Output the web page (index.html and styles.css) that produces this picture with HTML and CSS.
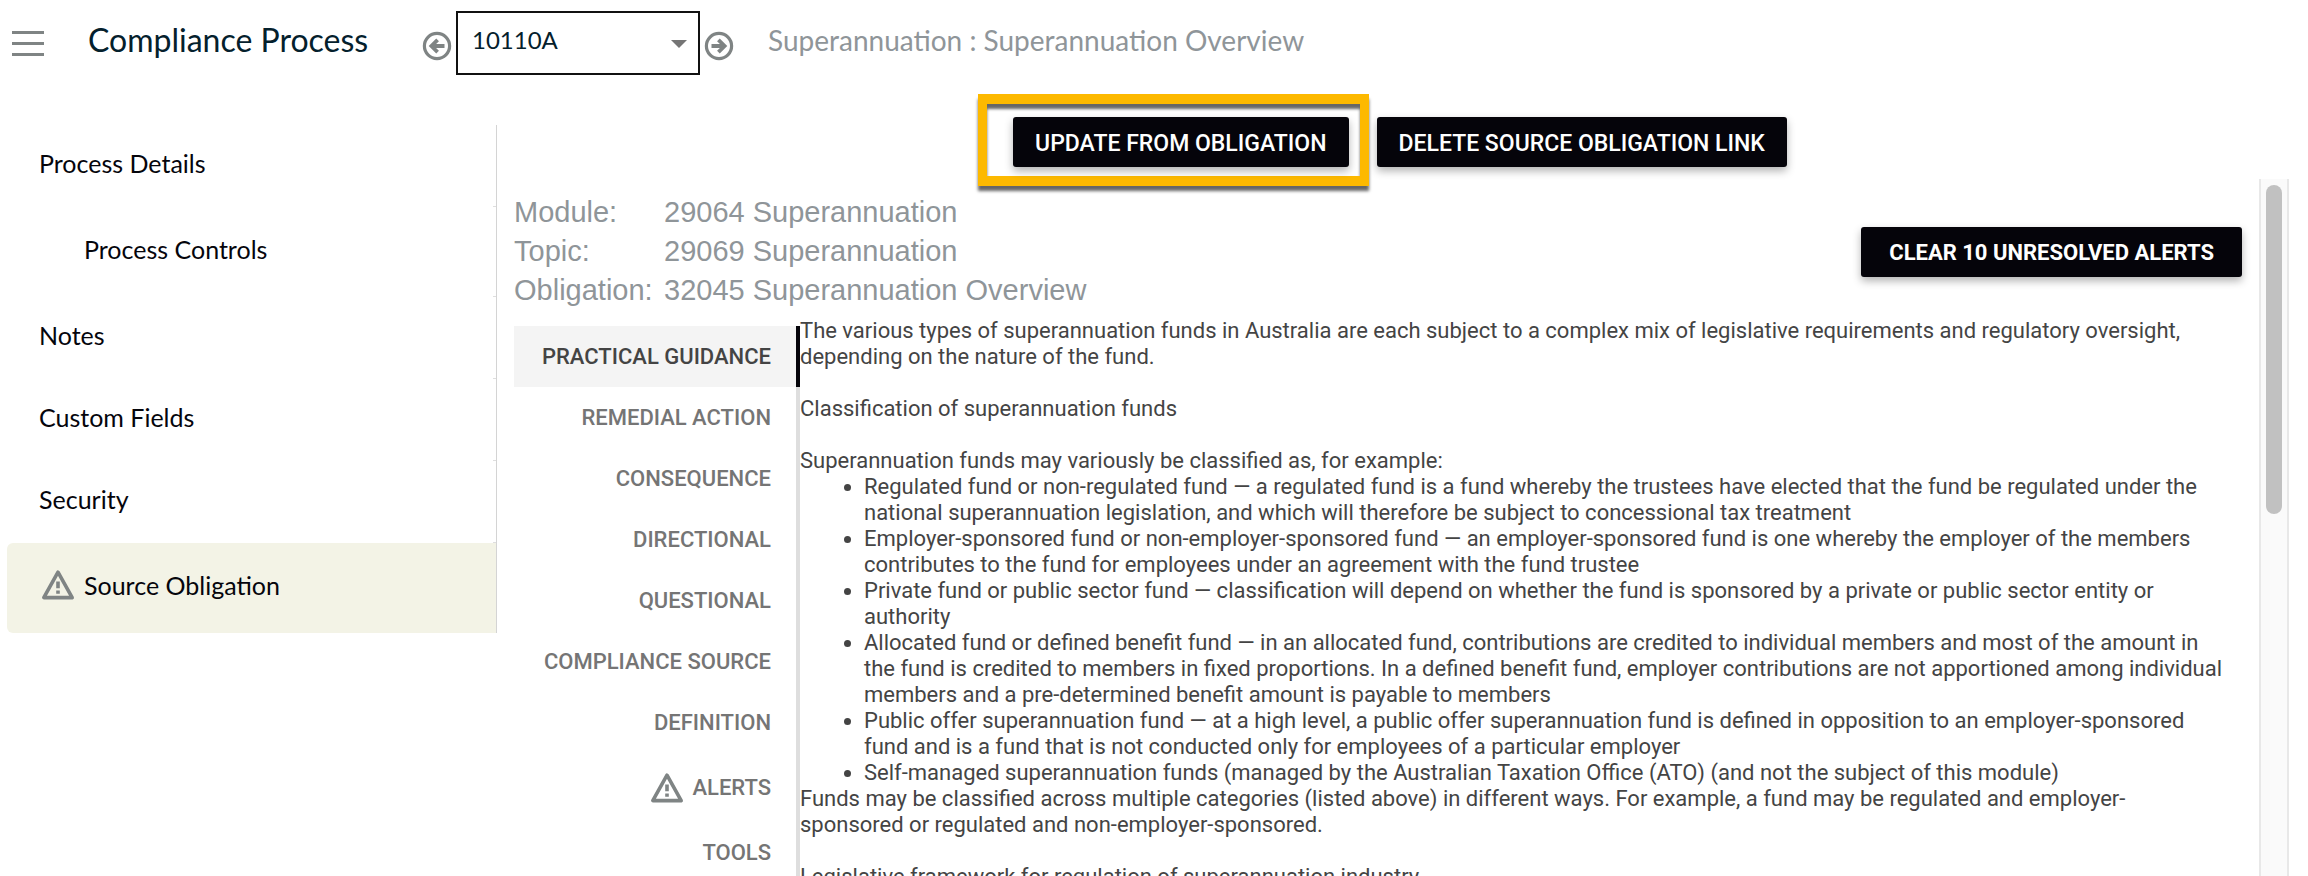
FILE: index.html
```html
<!DOCTYPE html>
<html lang="en">
<head>
<meta charset="utf-8">
<title>Compliance Process</title>
<link rel="stylesheet" href="styles.css">
</head>
<body>
<svg class="defs" aria-hidden="true">
  <symbol id="warning" viewBox="0 0 34 32">
    <path d="M17 3.2 31.2 28.6H2.8z" fill="none" stroke="#7f8484" stroke-width="3.6" stroke-linejoin="round"/>
    <path d="M17 12.6v6.6M17 21.4v3.4" fill="none" stroke="#7f8484" stroke-width="3.6"/>
  </symbol>
  <symbol id="arrow" viewBox="0 0 30 30">
    <circle cx="15" cy="15" r="12.6" fill="none" stroke="#7f8484" stroke-width="3.2"/>
    <path d="M7.5 15H20M14.4 8.8l6.2 6.2-6.2 6.2" fill="none" stroke="#7f8484" stroke-width="3.8"/>
  </symbol>
</svg>
<header class="topbar">
  <button class="menu" type="button" aria-label="Menu"><span></span><span></span><span></span></button>
  <h1 class="title">Compliance Process</h1>
  <div class="picker">
    <button class="step step-prev" type="button" aria-label="Previous process"><svg><use href="#arrow"/></svg></button>
    <div class="select-wrap">
      <select class="select" aria-label="Process"><option>10110A</option></select>
      <svg class="caret" viewBox="0 0 16 8"><path d="M0 0h16L8 8z" fill="#757575"/></svg>
    </div>
    <button class="step" type="button" aria-label="Next process"><svg><use href="#arrow"/></svg></button>
  </div>
  <p class="subtitle">Superannuation : Superannuation Overview</p>
</header>
<div class="layout">
  <nav class="sidebar">
    <a class="nav-item" href="#">Process Details</a>
    <a class="nav-item nav-tall nav-sub" href="#">Process Controls</a>
    <a class="nav-item" href="#">Notes</a>
    <a class="nav-item" href="#">Custom Fields</a>
    <a class="nav-item" href="#">Security</a>
    <a class="nav-item nav-tall nav-active" href="#"><svg class="warning"><use href="#warning"/></svg>Source Obligation</a>
  </nav>
  <main class="main">
    <div class="actions">
      <div class="callout"><button class="btn" type="button">UPDATE FROM OBLIGATION</button></div>
      <button class="btn btn-side" type="button">DELETE SOURCE OBLIGATION LINK</button>
    </div>
    <div class="scroller">
      <div class="content">
        <div class="summary">
          <dl class="meta">
            <dt>Module:</dt><dd>29064 Superannuation</dd>
            <dt>Topic:</dt><dd>29069 Superannuation</dd>
            <dt>Obligation:</dt><dd>32045 Superannuation Overview</dd>
          </dl>
          <button class="btn btn-bold" type="button">CLEAR 10 UNRESOLVED ALERTS</button>
        </div>
        <div class="detail">
          <div class="tabs" role="tablist">
            <button class="tab tab-active" type="button" role="tab" aria-selected="true">PRACTICAL GUIDANCE</button>
            <button class="tab" type="button" role="tab">REMEDIAL ACTION</button>
            <button class="tab" type="button" role="tab">CONSEQUENCE</button>
            <button class="tab" type="button" role="tab">DIRECTIONAL</button>
            <button class="tab" type="button" role="tab">QUESTIONAL</button>
            <button class="tab" type="button" role="tab">COMPLIANCE SOURCE</button>
            <button class="tab" type="button" role="tab">DEFINITION</button>
            <button class="tab tab-icon" type="button" role="tab"><svg class="warning"><use href="#warning"/></svg>ALERTS</button>
            <button class="tab" type="button" role="tab">TOOLS</button>
          </div>
          <article class="guidance" role="tabpanel">
            <p>The various types of superannuation funds in Australia are each subject to a complex mix of legislative requirements and regulatory oversight, depending on the nature of the fund.</p>
            <p class="spaced">Classification of superannuation funds</p>
            <p class="spaced">Superannuation funds may variously be classified as, for example:</p>
            <ul class="list">
              <li>Regulated fund or non-regulated fund — a regulated fund is a fund whereby the trustees have elected that the fund be regulated under the national superannuation legislation, and which will therefore be subject to concessional tax treatment</li>
              <li>Employer-sponsored fund or non-employer-sponsored fund — an employer-sponsored fund is one whereby the employer of the members contributes to the fund for employees under an agreement with the fund trustee</li>
              <li>Private fund or public sector fund — classification will depend on whether the fund is sponsored by a private or public sector entity or authority</li>
              <li>Allocated fund or defined benefit fund — in an allocated fund, contributions are credited to individual members and most of the amount in the fund is credited to members in fixed proportions. In a defined benefit fund, employer contributions are not apportioned among individual members and a pre-determined benefit amount is payable to members</li>
              <li>Public offer superannuation fund — at a high level, a public offer superannuation fund is defined in opposition to an employer-sponsored fund and is a fund that is not conducted only for employees of a particular employer</li>
              <li>Self-managed superannuation funds (managed by the Australian Taxation Office (ATO) (and not the subject of this module)</li>
            </ul>
            <p>Funds may be classified across multiple categories (listed above) in different ways. For example, a fund may be regulated and employer-sponsored or regulated and non-employer-sponsored.</p>
            <p class="spaced">Legislative framework for regulation of superannuation industry</p>
          </article>
        </div>
      </div>
      <div class="track"><div class="thumb"></div></div>
    </div>
  </main>
</div>
</body>
</html>
```

FILE: styles.css
```css
* { box-sizing: border-box; }

body {
  margin: 0;
  height: 100vh;
  overflow: hidden;
  display: flex;
  flex-direction: column;
  background: #fff;
  color: #444;
  font-family: Roboto, sans-serif;
  font-size: 22px;
  line-height: 26px;
}

p, h1, ul, dl, dd { margin: 0; padding: 0; }

button {
  border: 0;
  padding: 0;
  background: none;
  color: inherit;
  font: inherit;
  cursor: pointer;
}

.defs { display: none; }

.topbar {
  display: flex;
  align-items: center;
  flex: none;
  height: 86px;
  padding: 0 12px;
  font-family: Lato, sans-serif;
}

.menu {
  display: flex;
  flex-direction: column;
  gap: 8px;
  width: 32px;
  margin-right: 44px;
}
.menu span { height: 3px; background: #7f8484; }

.title {
  width: 334px;
  padding-bottom: 6px;
  color: #04202c;
  font-size: 32px;
  font-weight: 400;
  line-height: 40px;
}

.picker { display: flex; align-items: center; gap: 4px; }
.step { width: 30px; height: 30px; margin-top: 6px; }
.step svg { display: block; width: 30px; height: 30px; }
.step-prev { transform: rotate(180deg); }

.select-wrap { position: relative; }
.select {
  display: block;
  appearance: none;
  width: 244px;
  height: 64px;
  padding: 0 36px 6px 14px;
  border: 2px solid #111;
  border-radius: 0;
  background: #fff;
  color: #04202c;
  font: 24px/32px Lato, sans-serif;
}
.caret {
  position: absolute;
  top: 29px;
  right: 13px;
  width: 16px;
  height: 8px;
  pointer-events: none;
}

.subtitle {
  margin-left: 34px;
  padding-bottom: 6px;
  color: #8f9599;
  font-size: 28px;
  line-height: 40px;
}

.layout { display: flex; flex: 1; min-height: 0; }

.sidebar {
  flex: none;
  align-self: flex-start;
  width: 497px;
  margin-top: 39px;
  padding-left: 7px;
  border-right: 1px solid #d4d4d4;
  font-family: Lato, sans-serif;
  font-size: 25px;
}
.nav-item {
  position: relative;
  display: flex;
  align-items: center;
  height: 82px;
  padding: 0 0 6px 32px;
  color: #05050c;
  text-decoration: none;
}
.nav-item:not(:last-child)::after {
  content: "";
  position: absolute;
  right: 0;
  bottom: 0;
  width: 3px;
  height: 1px;
  background: #dedede;
}
.nav-tall { height: 90px; }
.nav-sub { padding-left: 77px; }
.nav-active {
  gap: 9px;
  padding-left: 34px;
  border-radius: 6px 0 0 6px;
  background: #f3f3e6;
}
.warning { flex: none; width: 34px; height: 32px; }

.main {
  display: flex;
  flex: 1;
  flex-direction: column;
  min-width: 0;
  padding: 8px 19px 0 17px;
}

.actions {
  display: flex;
  align-items: flex-start;
  justify-content: center;
  flex: none;
  gap: 8px;
  height: 85px;
  padding-right: 38px;
}
.callout {
  position: relative;
  z-index: 1;
  height: 92px;
  padding: 13px 11px 0 26px;
  border: solid #fdb900;
  border-width: 10px 9px;
  box-shadow: 0 5px 3px rgba(0, 0, 0, .6), inset 0 5px 3px rgba(0, 0, 0, .6);
}

.btn {
  flex: none;
  height: 50px;
  padding: 4px 22px 0;
  border-radius: 3px;
  background: #05040a;
  color: #fff;
  font-size: 23px;
  font-weight: 500;
  box-shadow: 0 4px 8px rgba(0, 0, 0, .3);
}
.btn-side { margin-top: 23px; }
.btn-bold { padding: 2px 28px 0; font-size: 22px; font-weight: 700; }

.scroller { display: flex; flex: 1; min-height: 0; }
.content { flex: 1; min-width: 0; overflow: hidden; padding: 13px 8px 0 0; }

.summary {
  display: flex;
  align-items: center;
  justify-content: space-between;
  padding-right: 9px;
  height: 118px;
}
.summary .btn { margin-top: 2px; }
.meta {
  display: grid;
  grid-template-columns: 150px auto;
  color: #8f9599;
  font: 29px/39px "Liberation Sans", Arial, sans-serif;
}

.detail { display: flex; align-items: flex-start; margin-top: 8px; }
.tabs { display: flex; flex: none; flex-direction: column; width: 286px; margin-top: 8px; }
.tab {
  display: flex;
  align-items: center;
  justify-content: flex-end;
  height: 61px;
  padding-right: 25px;
  border-right: 4px solid #dedede;
  color: #757575;
  font-weight: 500;
}
.tab-active {
  border-color: #05040a;
  background: #f4f4f4;
  color: #444;
}
.tab-icon { gap: 8px; height: 69px; }

.guidance { flex: 1; min-width: 0; padding-right: 26px; }
.spaced { margin-top: 26px; }
.list { padding-left: 64px; }

.track {
  flex: none;
  width: 30px;
  padding: 6px 5px;
  border: solid #e8e8e8;
  border-width: 0 2px;
  background: #fafafa;
}
.thumb {
  width: 16px;
  height: 48%;
  margin: 0 auto;
  border-radius: 8px;
  background: #c1c1c1;
}
```
